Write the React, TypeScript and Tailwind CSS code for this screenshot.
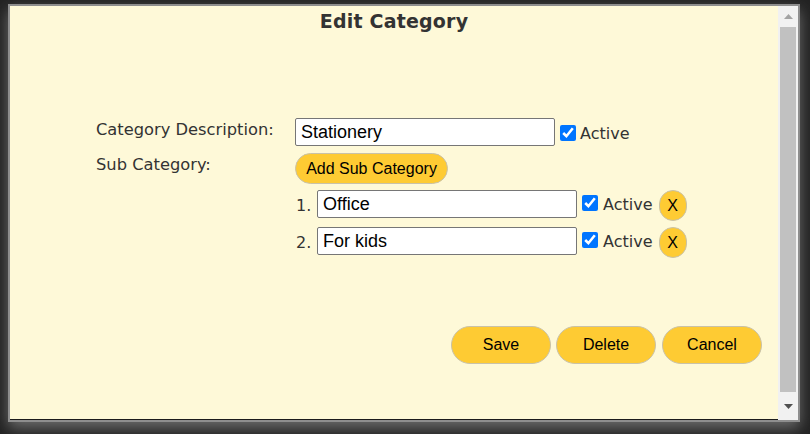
import React from "react";

const sans = "font-['DejaVu_Sans',Verdana,sans-serif]";
const arial = "font-['Liberation_Sans',Arial,sans-serif]";

function Check() {
  return (
    <input
      type="checkbox"
      defaultChecked
      className="h-4 w-4 shrink-0 accent-[#0075ff]"
    />
  );
}

function YellowButton({
  children,
  className = "",
}: {
  children: React.ReactNode;
  className?: string;
}) {
  return (
    <button
      type="button"
      className={`rounded-full border border-[#c9c2a8] bg-[#fecb33] text-[16px] text-black ${arial} ${className}`}
    >
      {children}
    </button>
  );
}

const subCategories = ["Office", "For kids"];

export default function App() {
  return (
    <div className="h-[434px] w-[810px] overflow-hidden bg-[#222]">
      <div className="ml-[8px] mt-[4px] flex h-[418px] w-[792px] border-2 border-[#8e8e8e] shadow-[0_6px_14px_rgba(170,170,170,0.55)]">
        <div
          className={`flex flex-1 flex-col border-b border-[#1c1c1c] bg-[#fef9d8] text-[#333] ${sans}`}
        >
          <h1 className="pt-[4px] text-center text-[19px] font-bold leading-[23px] tracking-[0.2px]">
            Edit Category
          </h1>

          <div className="mt-[85px] grid grid-cols-[199px_1fr] gap-y-[7px] pl-[86px] text-[16px] leading-[19px]">
            <label className="pt-[2px] text-[16.3px]">Category Description:</label>
            <div className="flex h-[28px] items-center">
              <input
                defaultValue="Stationery"
                className={`h-[28px] w-[260px] rounded-[2px] border border-[#767676] bg-white px-[5px] text-[18px] text-black ${arial}`}
              />
              <span className="ml-[5px] mt-[1px] flex items-center">
                <Check />
              </span>
              <span className="ml-[4px] mt-[2px]">Active</span>
            </div>

            <label className="pt-[2px] text-[16.3px]">Sub Category:</label>
            <div className="flex flex-col gap-[6px]">
              <YellowButton className="h-[31px] w-[153px] self-start">
                Add Sub Category
              </YellowButton>
              {subCategories.map((name, i) => (
                <div key={name} className="flex h-[31px] items-start">
                  <span className="mt-[6px] w-[22px] pl-[1px]">{i + 1}.</span>
                  <input
                    defaultValue={name}
                    className={`h-[28px] w-[260px] rounded-[2px] border border-[#767676] bg-white px-[5px] text-[18px] text-black ${arial}`}
                  />
                  <span className="ml-[5px] mt-[5px] flex items-center">
                    <Check />
                  </span>
                  <span className="ml-[5px] mt-[5px]">Active</span>
                  <YellowButton className="ml-[6px] h-[31px] w-[28px] px-0">
                    X
                  </YellowButton>
                </div>
              ))}
            </div>
          </div>

          <div className="mt-[68px] flex justify-end pr-[16px]">
            <YellowButton className="h-[38px] w-[100px]">Save</YellowButton>
            <YellowButton className="ml-[5px] h-[38px] w-[100px]">
              Delete
            </YellowButton>
            <YellowButton className="ml-[6px] h-[38px] w-[100px]">
              Cancel
            </YellowButton>
          </div>
        </div>

        {/* scrollbar */}
        <div className="flex w-[20px] flex-col bg-[#f1f1f1]">
          <div className="flex h-[21px] items-center justify-center">
            <svg width="9" height="5" viewBox="0 0 9 5">
              <path d="M4.5 0 L9 5 L0 5 Z" fill="#a3a3a3" />
            </svg>
          </div>
          <div className="mx-[2px] h-[365px] bg-[#c1c1c1]" />
          <div className="flex flex-1 items-center justify-center">
            <svg width="9" height="5" viewBox="0 0 9 5">
              <path d="M0 0 L9 0 L4.5 5 Z" fill="#505050" />
            </svg>
          </div>
        </div>
      </div>
    </div>
  );
}
